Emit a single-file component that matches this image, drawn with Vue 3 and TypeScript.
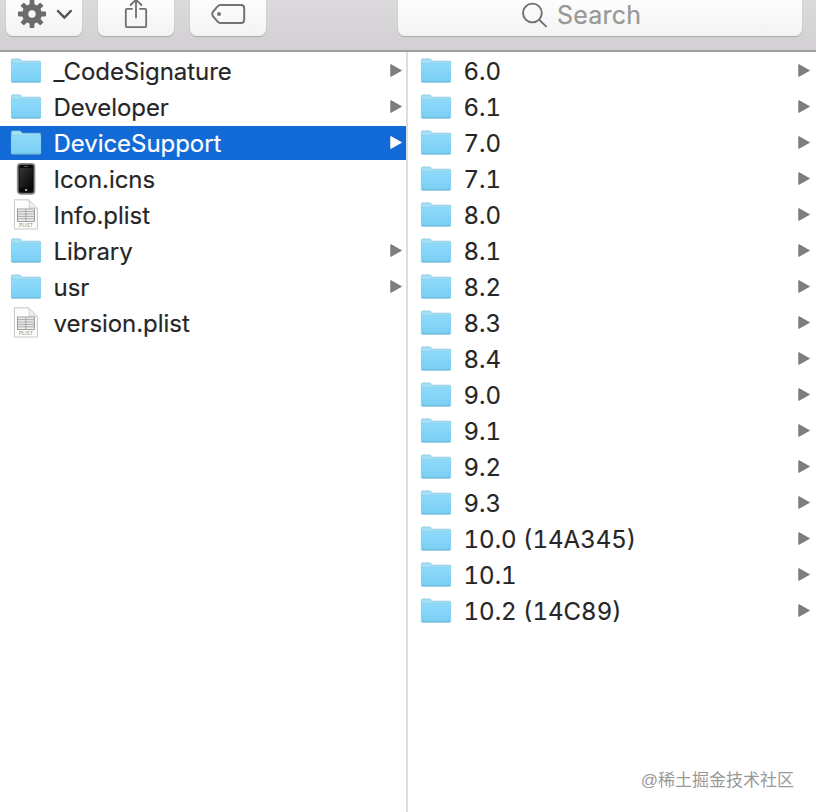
<script setup lang="ts">
type Kind = 'folder' | 'phone' | 'plist'
interface Entry {
  name: string
  kind: Kind
  selected?: boolean
}

const folder = (name: string, selected = false): Entry => ({ name, kind: 'folder', selected })

const bundle: Entry[] = [
  folder('_CodeSignature'),
  folder('Developer'),
  folder('DeviceSupport', true),
  { name: 'Icon.icns', kind: 'phone' },
  { name: 'Info.plist', kind: 'plist' },
  folder('Library'),
  folder('usr'),
  { name: 'version.plist', kind: 'plist' },
]

const versions: Entry[] = [
  '6.0', '6.1', '7.0', '7.1', '8.0', '8.1', '8.2', '8.3', '8.4',
  '9.0', '9.1', '9.2', '9.3', '10.0 (14A345)', '10.1', '10.2 (14C89)',
].map((name) => folder(name))

const columns = [
  { id: 'bundle', entries: bundle },
  { id: 'versions', entries: versions },
]
const teeth = [0, 45, 90, 135, 180, 225, 270, 315]
</script>

<template>
  <div class="window">
    <svg class="defs" width="0" height="0" aria-hidden="true">
      <defs>
        <linearGradient id="folderFill" x1="0" y1="0" x2="0" y2="1">
          <stop offset="0" stop-color="#8fdafa" />
          <stop offset="1" stop-color="#78cff5" />
        </linearGradient>
        <linearGradient id="screenFill" x1="0" y1="0" x2="1" y2="1">
          <stop offset="0" stop-color="#363636" />
          <stop offset="1" stop-color="#050505" />
        </linearGradient>
      </defs>
    </svg>

    <header class="toolbar">
      <button class="tool">
        <svg width="76" height="36" viewBox="0 0 76 36">
          <g fill="#6b6b6b">
            <rect v-for="a in teeth" :key="a" x="23.6" y="0" width="4.8" height="7" rx="0.8" :transform="`rotate(${a} 26 14)`" />
          </g>
          <circle cx="26" cy="14" r="6.8" fill="none" stroke="#6b6b6b" stroke-width="6.2" />
          <path d="M52 11 L58.4 17.6 L64.8 11" fill="none" stroke="#555" stroke-width="2.5" stroke-linecap="round" stroke-linejoin="round" />
        </svg>
      </button>
      <button class="tool">
        <svg width="76" height="36" viewBox="0 0 76 36" fill="none" stroke="#707070" stroke-width="1.8" stroke-linecap="round" stroke-linejoin="round">
          <path d="M34 8.8 H29 Q27.8 8.8 27.8 10 V26 Q27.8 27.2 29 27.2 H47 Q48.2 27.2 48.2 26 V10 Q48.2 8.8 47 8.8 H42" />
          <path d="M38 17.5 V0.2 M32.6 5 L38 -0.4 L43.4 5" />
        </svg>
      </button>
      <button class="tool">
        <svg width="76" height="36" viewBox="0 0 76 36" fill="none" stroke="#737373" stroke-width="2" stroke-linejoin="round">
          <path d="M30.4 5 H51 Q54.2 5 54.2 8.2 V19.8 Q54.2 23 51 23 H30.4 Q28.8 23 27.4 21.4 L22.8 16 Q21.4 14 22.8 12 L27.4 6.6 Q28.8 5 30.4 5 Z" />
          <circle cx="29" cy="14" r="2" fill="#737373" stroke="none" />
        </svg>
      </button>
      <div class="search">
        <svg width="26" height="28" viewBox="0 0 26 28" fill="none" stroke="#707070" stroke-width="1.9" stroke-linecap="round">
          <circle cx="10.4" cy="12" r="9.4" />
          <path d="M17.2 18.8 L24 25.4" />
        </svg>
        <span>Search</span>
      </div>
    </header>

    <main class="browser">
      <ul v-for="col in columns" :key="col.id" class="column" :class="col.id">
        <li v-for="e in col.entries" :key="e.name" class="row" :class="{ selected: e.selected }">
          <svg v-if="e.kind === 'folder'" class="icon" width="32" height="34" viewBox="0 0 32 34">
            <path d="M1.4 27.4 V6.2 Q1.4 4.9 2.7 4.9 H9.5 Q10.7 4.9 11.4 6 L12.2 7.2 H29.6 Q30.6 7.2 30.6 8.2 V27.4 Z" fill="#a5e0f5" stroke="#7cc3e0" stroke-width="0.7" />
            <path d="M1.2 9.4 H30.8 V27.2 Q30.8 28.2 29.8 28.2 H2.2 Q1.2 28.2 1.2 27.2 Z" fill="url(#folderFill)" />
            <path d="M1.2 9.3 H30.8" stroke="#7cc9e8" stroke-width="0.6" />
            <path d="M1.6 28 H30.4" stroke="#6aabc8" stroke-width="1" />
          </svg>
          <svg v-else-if="e.kind === 'phone'" class="icon" width="32" height="34" viewBox="0 0 32 34">
            <rect x="7.6" y="1.7" width="17" height="30.2" rx="3" fill="#3b3b3b" stroke="#8d8d8d" stroke-width="1.5" />
            <rect x="9" y="3" width="14.2" height="27.6" rx="1.8" fill="#090909" />
            <rect x="9.6" y="6" width="13" height="19.6" fill="url(#screenFill)" />
            <path d="M14 4.4 H18" stroke="#777" stroke-width="0.7" />
            <rect x="15" y="27" width="2.2" height="2" rx="0.5" fill="#aaa" />
          </svg>
          <svg v-else class="icon" width="32" height="34" viewBox="0 0 32 34">
            <path d="M4.4 1.8 H18.6 L27.4 10.6 V31 H4.4 Z" fill="#fdfdfd" stroke="#c6c6c6" stroke-width="1" />
            <path d="M18.6 1.8 Q20.4 6 18.8 10.2 Q23 9 27.4 10.6 Z" fill="#f0f0f0" stroke="#cacaca" stroke-width="0.8" />
            <rect x="7.4" y="11" width="17" height="12.4" fill="#eee" stroke="#8a8a8a" stroke-width="0.8" />
            <path d="M7.4 13.6 H24.4 M7.4 16 H24.4 M7.4 18.4 H24.4 M7.4 20.8 H24.4 M15.9 11 V23.4" stroke="#999" stroke-width="0.8" />
            <text x="16" y="29.2" text-anchor="middle" class="badge">PLIST</text>
          </svg>
          <span class="name">{{ e.name }}</span>
          <svg v-if="e.kind === 'folder'" class="arrow" width="12" height="14" viewBox="0 0 12 14">
            <path d="M0.8 0.6 L11.4 6.5 L0.8 12.4 Z" fill="currentColor" stroke="currentColor" stroke-width="1" stroke-linejoin="round" />
          </svg>
        </li>
      </ul>
      <div class="watermark">@稀土掘金技术社区</div>
    </main>
  </div>
</template>

<style>
body {
  margin: 0;
  background: #fff;
}
</style>

<style scoped>
.window {
  position: relative;
  display: flex;
  flex-direction: column;
  width: 816px;
  height: 812px;
  overflow: hidden;
  background: #fff;
  color: #262626;
  font-family: Inter, "Liberation Sans", sans-serif;
}
.defs {
  position: absolute;
}
.toolbar {
  box-sizing: border-box;
  display: flex;
  align-items: flex-start;
  gap: 16px;
  height: 52px;
  padding: 0 14px 0 6px;
  border-bottom: 2px solid #a09da0;
  background: linear-gradient(#dcdadc, #d2d0d2);
}
.tool,
.search {
  box-sizing: border-box;
  height: 36px;
  border: 0;
  border-radius: 0 0 7px 7px;
  background: linear-gradient(#fdfdfd, #f3f3f3);
  box-shadow: 0 1px 1px #aaa8aa, 0 0 1px #b5b3b5;
}
.tool {
  width: 76px;
  padding: 0;
}
.tool svg {
  display: block;
}
.search {
  display: flex;
  align-items: flex-start;
  flex: 1;
  gap: 9px;
  margin-left: 116px;
  padding-left: 124px;
  color: #989898;
  font-size: 25px;
  line-height: 31px;
  letter-spacing: 0.2px;
  -webkit-text-stroke: 0.2px currentColor;
}
.search svg {
  margin-top: 1px;
}
.browser {
  flex: 1;
  display: flex;
}
.column {
  box-sizing: border-box;
  display: flex;
  flex-direction: column;
  gap: 2px;
  margin: 0;
  padding: 2px 0 0;
  list-style: none;
}
.bundle {
  width: 408px;
  border-right: 2px solid #dedede;
}
.versions {
  flex: 1;
}
.row {
  box-sizing: border-box;
  display: flex;
  align-items: center;
  height: 34px;
  padding: 0 4px 0 10px;
}
.versions .row {
  padding: 0 6px 0 12px;
}
.selected {
  background: #126ad6;
  color: #fff;
}
.icon {
  flex: none;
}
.name {
  flex: 1;
  margin-left: 11.5px;
  padding-top: 2px;
  font-size: 24px;
  line-height: 32px;
  letter-spacing: -0.05px;
  white-space: nowrap;
  -webkit-text-stroke: 0.15px currentColor;
}
.versions .name {
  font-variant-numeric: tabular-nums;
  letter-spacing: 0;
}
.arrow {
  color: #7e7e7e;
}
.selected .arrow {
  color: #fff;
}
.badge {
  fill: #999;
  font-size: 5px;
  font-weight: 500;
}
.watermark {
  position: absolute;
  right: 22px;
  bottom: 19px;
  color: #999;
  font-family: "Liberation Sans", "Noto Sans CJK SC", sans-serif;
  font-size: 17px;
  line-height: 24px;
}
</style>
